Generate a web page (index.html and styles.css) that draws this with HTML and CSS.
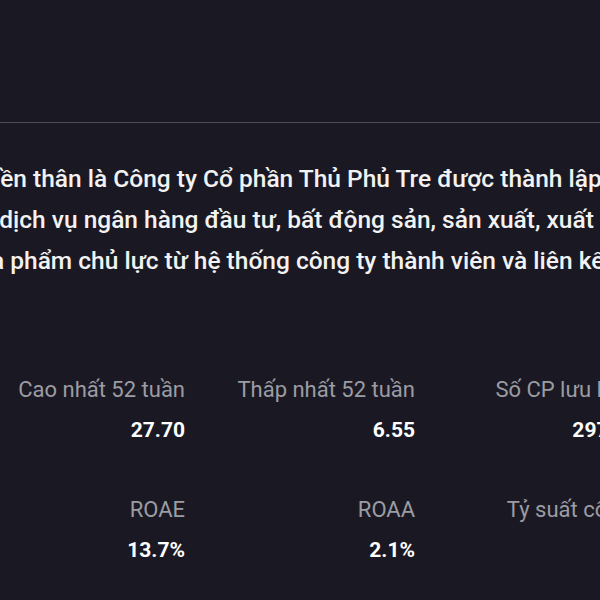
FILE: index.html
```html
<!DOCTYPE html>
<html lang="vi">
<head>
  <meta charset="UTF-8">
  <meta name="viewport" content="width=device-width, initial-scale=1.0">
  <title>Hồ sơ doanh nghiệp</title>
  <link rel="stylesheet" href="styles.css">
</head>
<body>
  <div class="page">
    <div class="top-space"></div>
    <hr class="divider">

    <div class="profile">
      <p class="intro">
        <span class="line">Tiền thân là Công ty Cổ phần Thủ Phủ Tre được thành lập năm 2008</span>
        <span class="line">ở dịch vụ ngân hàng đầu tư, bất động sản, sản xuất, xuất nhập khẩu</span>
        <span class="line">và phẩm chủ lực từ hệ thống công ty thành viên và liên kết.</span>
      </p>

      <div class="stats">
        <div class="stat">
          <div class="stat-label">Cao nhất 52 tuần</div>
          <div class="stat-value">27.70</div>
        </div>
        <div class="stat">
          <div class="stat-label">Thấp nhất 52 tuần</div>
          <div class="stat-value">6.55</div>
        </div>
        <div class="stat">
          <div class="stat-label">Số CP lưu hành</div>
          <div class="stat-value">297.5M</div>
        </div>
        <div class="stat">
          <div class="stat-label">ROAE</div>
          <div class="stat-value">13.7%</div>
        </div>
        <div class="stat">
          <div class="stat-label">ROAA</div>
          <div class="stat-value">2.1%</div>
        </div>
        <div class="stat">
          <div class="stat-label">Tỷ suất cổ tức</div>
          <div class="stat-value">1.6%</div>
        </div>
      </div>
    </div>
  </div>
</body>
</html>
```

FILE: styles.css
```css
html, body {
  margin: 0;
  padding: 0;
  background-color: #1a1923;
  overflow: hidden;
}
body {
  font-family: Roboto, "Noto Sans", Arial, sans-serif;
  color: #f2f2f2;
}
.page {
  width: 600px;
}
.top-space {
  height: 122px;
}
.divider {
  margin: 0;
  border: none;
  border-top: 1px solid #4b4a55;
}
.profile {
  margin-left: -21px;
  width: 780px;
}
.intro {
  margin: 35px 0 0;
  font-size: 24.5px;
  font-weight: 500;
  line-height: 41px;
  white-space: nowrap;
}
.intro .line {
  display: block;
}
.stats {
  display: grid;
  grid-template-columns: repeat(3, 230px);
  margin: 97px 0 0 -24px;
  row-gap: 56px;
}
.stat {
  text-align: right;
}
.stat-label {
  font-size: 22px;
  line-height: 24px;
  color: #9c9ca3;
}
.stat-value {
  margin-top: 16px;
  font-size: 21px;
  line-height: 24px;
  font-weight: 700;
  color: #ffffff;
}
```
